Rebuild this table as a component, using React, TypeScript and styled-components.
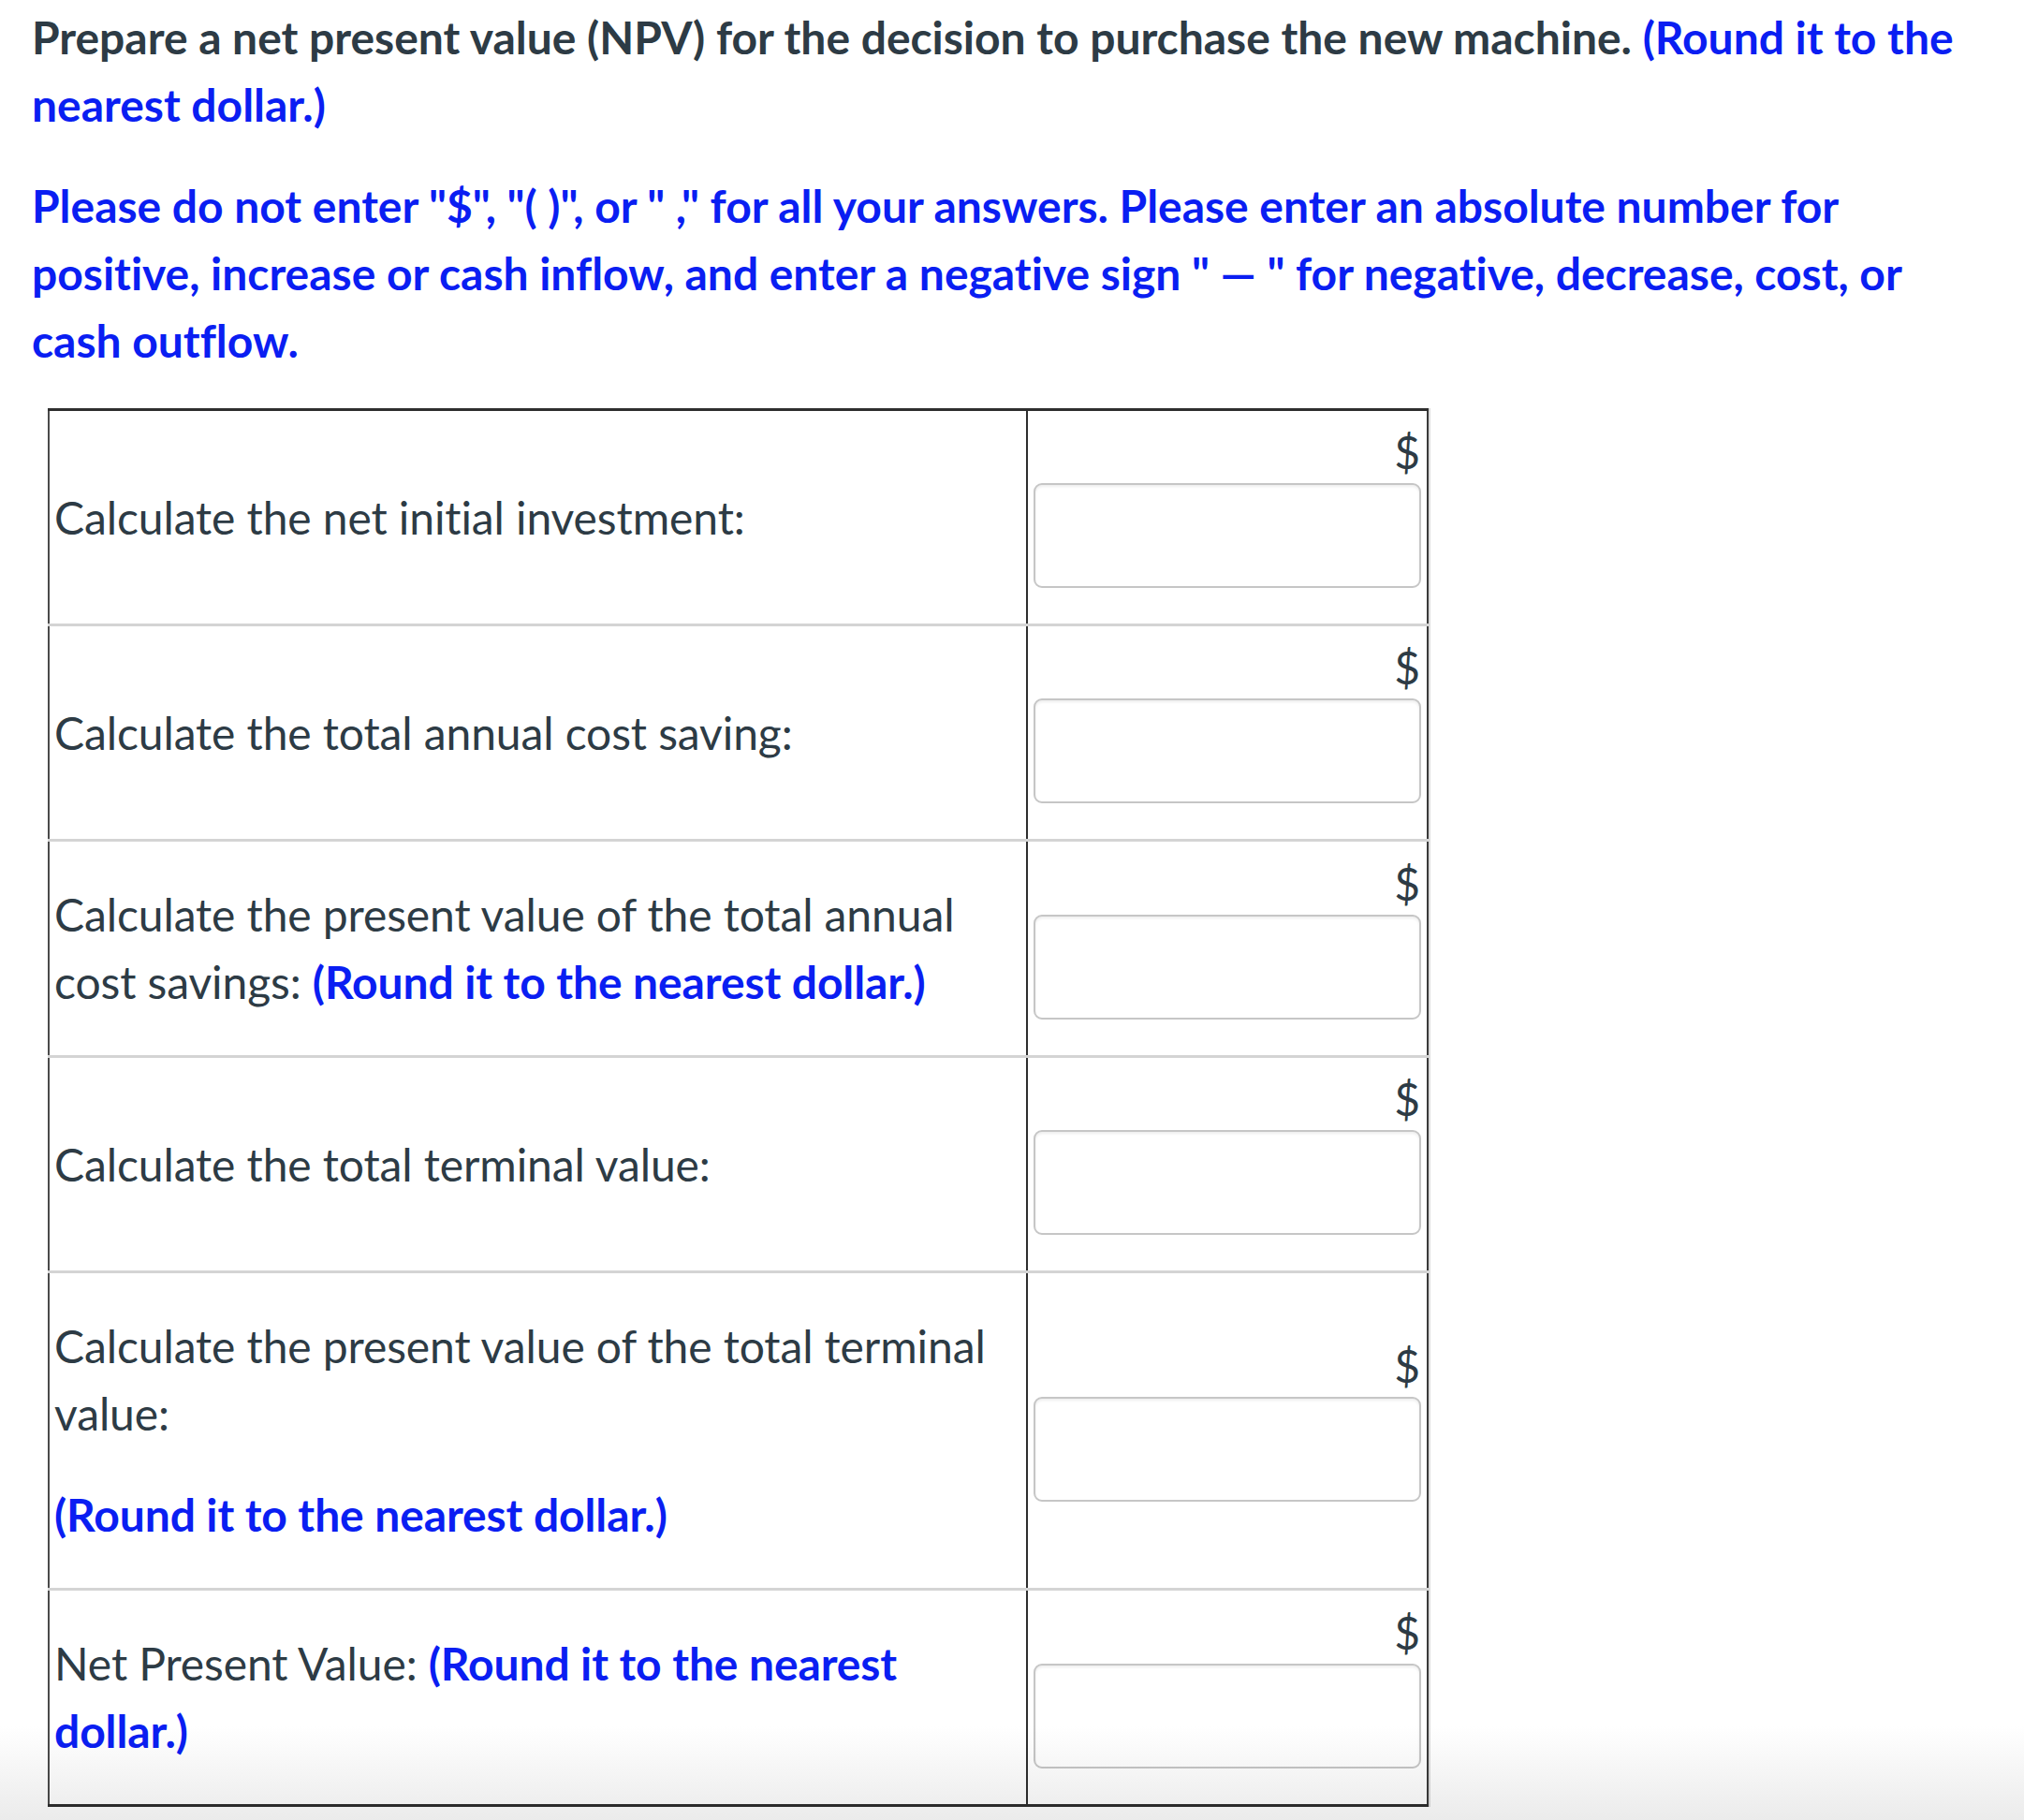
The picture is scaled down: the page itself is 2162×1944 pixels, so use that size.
import React from "react";
import styled, { createGlobalStyle } from "styled-components";

const GlobalStyle = createGlobalStyle`
  html, body {
    margin: 0;
    padding: 0;
    background: #ffffff;
  }
  body {
    font-family: Lato, "Liberation Sans", Arial, sans-serif;
    color: #2d3b45;
  }
`;

const Page = styled.main`
  padding: 4px 57px 0 34px;
  font-size: 48px;
  line-height: 72px;
  letter-spacing: -0.1px;
`;

const Para = styled.p<{ $bold?: boolean; $blue?: boolean }>`
  margin: 0 0 36px;
  letter-spacing: -0.02px;
  font-weight: ${(p) => (p.$bold ? 700 : 400)};
  color: ${(p) => (p.$blue ? "#0a1ef2" : "#2d3b45")};
`;

const Blue = styled.span`
  color: #0a1ef2;
  font-weight: 700;
`;

const Table = styled.table`
  margin: 1px 0 0 17px;
  width: 1473px;
  border-collapse: collapse;
  table-layout: fixed;
  border-top: 3px solid #2e2e2e;
  border-bottom: 3px solid #2e2e2e;
  border-left: 2px solid #4a4a4a;
  border-right: 2px solid #3a3a3a;
  box-shadow: 2px 0 0 #dcdcdc;
`;

const Row = styled.tr`
  & + & > td {
    border-top: 3px solid #d4d4d4;
  }
`;

const LabelCell = styled.td`
  padding: 6px 8px 6px 5px;
  vertical-align: middle;
  border-right: 2px solid #2e2e2e;
`;

const CellPara = styled.p`
  margin: 36px 0;
`;

const AnswerCell = styled.td`
  padding: 8px 6px;
  vertical-align: middle;
`;

const Dollar = styled.div`
  text-align: right;
  line-height: 72px;
  padding-right: 1px;
`;

const AnswerInput = styled.input`
  display: block;
  box-sizing: border-box;
  width: 100%;
  height: 112px;
  margin: -3px 0 30px;
  border: 2px solid #c6c6c6;
  border-radius: 9px;
  background: #ffffff;
  box-shadow: inset 0 2px 3px rgba(0, 0, 0, 0.07);
  font: inherit;
  color: #2d3b45;
  padding: 0 12px;
  outline: none;
`;

const Fade = styled.div`
  position: fixed;
  left: 0;
  right: 0;
  bottom: 0;
  height: 100px;
  background: linear-gradient(to bottom, #ffffff 0%, #ebebeb 100%);
  mix-blend-mode: multiply;
  pointer-events: none;
`;

type Item = { key: string; label: React.ReactNode };

const items: Item[] = [
  { key: "a", label: <CellPara>Calculate the net initial investment:</CellPara> },
  { key: "b", label: <CellPara>Calculate the total annual cost saving:</CellPara> },
  {
    key: "c",
    label: (
      <CellPara>
        Calculate the present value of the total annual cost savings:{" "}
        <Blue>(Round it to the nearest dollar.)</Blue>
      </CellPara>
    ),
  },
  { key: "d", label: <CellPara>Calculate the total terminal value:</CellPara> },
  {
    key: "e",
    label: (
      <>
        <CellPara>Calculate the present value of the total terminal value:</CellPara>
        <CellPara>
          <Blue>(Round it to the nearest dollar.)</Blue>
        </CellPara>
      </>
    ),
  },
  {
    key: "f",
    label: (
      <CellPara>
        Net Present Value: <Blue>(Round it to the nearest dollar.)</Blue>
      </CellPara>
    ),
  },
];

export default function App() {
  return (
    <>
      <GlobalStyle />
      <Page>
        <Para $bold>
          Prepare a net present value (NPV) for the decision to purchase the new machine.{" "}
          <Blue>(Round it to the nearest dollar.)</Blue>
        </Para>
        <Para $bold $blue>
          Please do not enter "$", "( )", or " ," for all your answers. Please enter an absolute
          number for positive, increase or cash inflow, and enter a negative sign " — " for
          negative, decrease, cost, or cash outflow.
        </Para>
        <Table>
          <colgroup>
            <col style={{ width: 1045 }} />
            <col style={{ width: 428 }} />
          </colgroup>
          <tbody>
            {items.map((it) => (
              <Row key={it.key}>
                <LabelCell>{it.label}</LabelCell>
                <AnswerCell>
                  <Dollar>$</Dollar>
                  <AnswerInput type="text" aria-label="answer" />
                </AnswerCell>
              </Row>
            ))}
          </tbody>
        </Table>
      </Page>
      <Fade />
    </>
  );
}
